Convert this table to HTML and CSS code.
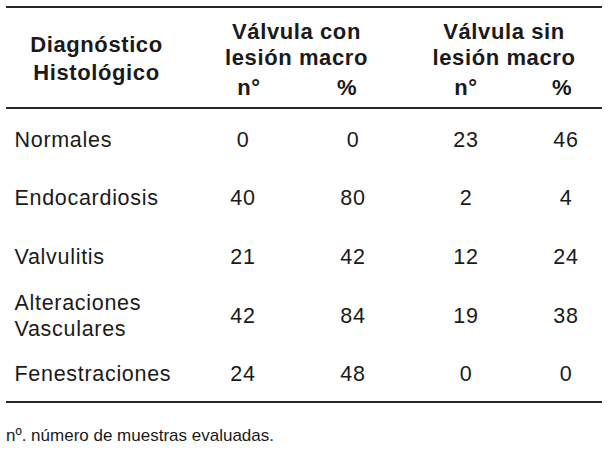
FILE: index.html
```html
<!DOCTYPE html>
<html lang="es">
<head>
<meta charset="utf-8">
<title>Diagnóstico histológico</title>
<link rel="stylesheet" href="styles.css">
</head>
<body>
<div class="table">
  <div class="thead">
    <div class="diag">Diagnóstico<br>Histológico</div>
    <div class="group group-1">Válvula con<br>lesión macro</div>
    <div class="group group-2">Válvula sin<br>lesión macro</div>
    <div class="sub sub-n1">n°</div>
    <div class="sub sub-p1">%</div>
    <div class="sub">n°</div>
    <div class="sub">%</div>
  </div>
  <div class="tbody">
    <div class="row"><div class="label">Normales</div><div class="num">0</div><div class="num">0</div><div class="num">23</div><div class="num last">46</div></div>
    <div class="row"><div class="label">Endocardiosis</div><div class="num">40</div><div class="num">80</div><div class="num">2</div><div class="num last">4</div></div>
    <div class="row"><div class="label">Valvulitis</div><div class="num">21</div><div class="num">42</div><div class="num">12</div><div class="num last">24</div></div>
    <div class="row"><div class="label two">Alteraciones<br>Vasculares</div><div class="num">42</div><div class="num">84</div><div class="num">19</div><div class="num last">38</div></div>
    <div class="row"><div class="label">Fenestraciones</div><div class="num">24</div><div class="num">48</div><div class="num">0</div><div class="num last">0</div></div>
  </div>
</div>
<p class="note">nº. número de muestras evaluadas.</p>
</body>
</html>
```
FILE: styles.css
```css
html, body {
  margin: 0;
  padding: 0;
  background: #ffffff;
}

body {
  font-family: "Liberation Sans", Arial, sans-serif;
  color: #1a1a1a;
}

.table {
  margin: 6px 0 0 6px;
  width: 596px;
  border-top: 2px solid #262626;
  border-bottom: 2px solid #262626;
}

.thead {
  display: grid;
  grid-template-columns: 184px 106px 114px 112px 80px;
  grid-template-rows: 52px 26px;
  row-gap: 4px;
  padding: 11px 0 6px;
  border-bottom: 2px solid #262626;
  font-weight: bold;
  font-size: 22px;
  letter-spacing: 0.6px;
}

.diag {
  grid-column: 1;
  grid-row: 1 / span 2;
  align-self: center;
  text-align: center;
  line-height: 28px;
  padding-right: 3px;
  margin-top: -2px;
}

.group {
  line-height: 26px;
  text-align: center;
}

.group-1 {
  grid-column: 2 / span 2;
  grid-row: 1;
  padding-right: 7px;
}

.group-2 {
  grid-column: 4 / span 2;
  grid-row: 1;
  padding-right: 4px;
}

.sub {
  grid-row: 2;
  line-height: 26px;
  text-align: center;
}

.sub-n1 {
  padding-left: 12px;
}

.sub-p1 {
  padding-right: 12px;
}

.tbody {
  display: flex;
  flex-direction: column;
  gap: 8.6px;
  padding: 5.7px 0 2px;
  font-size: 21.5px;
  letter-spacing: 0.7px;
}

.row {
  display: grid;
  grid-template-columns: 184px 106px 114px 112px 80px;
  height: 50px;
  align-items: center;
}

.label {
  padding-left: 8.5px;
  line-height: 26px;
  white-space: nowrap;
}

.num {
  text-align: center;
  line-height: 26px;
}

.num.last {
  padding-left: 8px;
}

.note {
  margin: 23px 0 0 6px;
  font-size: 17px;
  line-height: 20px;
}
```
